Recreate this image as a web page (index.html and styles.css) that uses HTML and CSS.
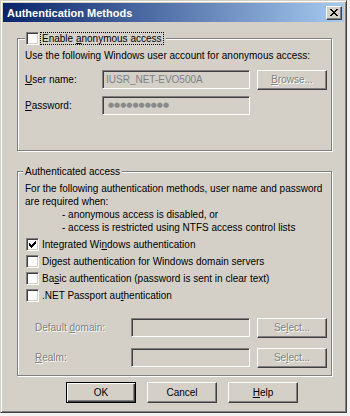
FILE: index.html
```html
<!DOCTYPE html>
<html>
  <head>
    <title>Authentication Methods</title>
    <link rel="stylesheet" href="styles.css">
  </head>
  <body>
    <div class="window">
      <div class="titlebar">
        <span class="title">Authentication Methods</span>
        <span class="close">
          <svg width="8" height="7" viewBox="0 0 8 7" shape-rendering="crispEdges">
            <path d="M0 0h2v1h-2zM6 0h2v1h-2zM1 1h2v1h-2zM5 1h2v1h-2zM2 2h4v1h-4zM3 3h2v1h-2zM2 4h4v1h-4zM1 5h2v1h-2zM5 5h2v1h-2zM0 6h2v1h-2zM6 6h2v1h-2z" fill="#000"/>
          </svg>
        </span>
      </div>

      <div class="content">
        <!-- anonymous access -->
        <fieldset class="group group-anon">
          <legend class="legend-check">
            <span class="check"></span>
            <span class="focus">Enable <u>a</u>nonymous access</span>
          </legend>
          <p class="line">Use the following Windows user account for anonymous access:</p>
          <div class="field-row">
            <span class="field-label"><u>U</u>ser name:</span>
            <div class="edit edit-wide">IUSR_NET-EVO500A</div>
            <div class="btn disabled"><u>B</u>rowse...</div>
          </div>
          <div class="field-row row-gap">
            <span class="field-label"><u>P</u>assword:</span>
            <div class="edit edit-wide dots">●●●●●●●●●●</div>
          </div>
        </fieldset>

        <!-- authenticated access -->
        <fieldset class="group group-auth">
          <legend class="legend-text">Authenticated access</legend>
          <p class="line">For the following authentication methods, user name and password</p>
          <p class="line">are required when:</p>
          <p class="line indent">- anonymous access is disabled, or</p>
          <p class="line indent">- access is restricted using NTFS access control lists</p>

          <div class="check-list">
            <div class="check-row">
              <span class="check">
                <svg width="9" height="9" viewBox="0 0 9 9" shape-rendering="crispEdges">
                  <path d="M1 3h1v3h-1zM2 4h1v3h-1zM3 5h1v3h-1zM4 4h1v3h-1zM5 3h1v3h-1zM6 2h1v3h-1zM7 1h1v3h-1z" fill="#000"/>
                </svg>
              </span>
              <span>Integrated Wi<u>n</u>dows authentication</span>
            </div>
            <div class="check-row">
              <span class="check"></span>
              <span>Di<u>g</u>est authentication for Windows domain servers</span>
            </div>
            <div class="check-row">
              <span class="check"></span>
              <span>Ba<u>s</u>ic authentication (password is sent in clear text)</span>
            </div>
            <div class="check-row">
              <span class="check"></span>
              <span>.NET Passport au<u>t</u>hentication</span>
            </div>
          </div>

          <div class="field-row domain-row">
            <span class="field-label domain-label disabled-text">Default <u>d</u>omain:</span>
            <div class="edit edit-narrow"></div>
            <div class="btn disabled">Se<u>l</u>ect...</div>
          </div>
          <div class="field-row realm-row">
            <span class="field-label domain-label disabled-text"><u>R</u>ealm:</span>
            <div class="edit edit-narrow"></div>
            <div class="btn disabled">Se<u>l</u>ect...</div>
          </div>
        </fieldset>

        <div class="buttons">
          <div class="btn btn-default">OK</div>
          <div class="btn">Cancel</div>
          <div class="btn"><u>H</u>elp</div>
        </div>
      </div>
    </div>
  </body>
</html>
```

FILE: styles.css
```css
body {
  margin: 0;
  background: #f2f2f2;
  font-family: "Liberation Sans", Arial, sans-serif;
  font-size: 10px;
  color: #000;
}
.window {
  width: 347px;
  height: 413px;
  box-sizing: border-box;
  background: #d4d0c8;
  border: 1px solid;
  border-color: #d4d0c8 #404040 #404040 #d4d0c8;
  box-shadow: inset 1px 1px #fff, inset -1px -1px #808080;
  padding: 2px;
  display: flex;
  flex-direction: column;
}
.titlebar {
  height: 19px;
  flex: none;
  background: linear-gradient(90deg, #0a246a, #a6caf0);
  display: flex;
  align-items: center;
  justify-content: space-between;
  padding: 0 2px 0 4px;
}
.title {
  color: #fff;
  font-weight: bold;
  font-size: 11px;
  padding-top: 1px;
}
.close {
  width: 16px;
  height: 14px;
  box-sizing: border-box;
  background: #d4d0c8;
  border: 1px solid;
  border-color: #fff #404040 #404040 #fff;
  box-shadow: inset -1px -1px #808080;
  display: flex;
  align-items: center;
  justify-content: center;
  padding-bottom: 1px;
}
.content {
  padding: 10px 12px 0 14px;
}
.group {
  margin: 0;
  padding: 4px 4px 35px 7px;
  border: 1px solid #808080;
  box-shadow: inset 1px 1px #fff, 1px 1px #fff;
  min-width: 0;
}
.group-auth {
  margin-top: 14px;
  padding-bottom: 8px;
}
.legend-check {
  display: flex;
  align-items: center;
  padding: 0 2px 0 1px;
  background: #d4d0c8;
}
.legend-text {
  margin-left: -2px;
  padding: 0 2px;
  line-height: 13px;
  background: #d4d0c8;
}
.focus {
  margin-left: 1px;
  padding: 0 1px;
  line-height: 11px;
  border: 1px dotted #000;
}
.check {
  width: 13px;
  height: 13px;
  box-sizing: border-box;
  flex: none;
  background: #fff;
  border: 1px solid;
  border-color: #808080 #fff #fff #808080;
  box-shadow: inset 1px 1px #404040, inset -1px -1px #d4d0c8;
  padding: 1px 0 0 1px;
}
.check svg {
  display: block;
}
.line {
  margin: 0;
  line-height: 13px;
  white-space: nowrap;
}
.indent {
  padding-left: 37px;
}
.field-row {
  display: flex;
  align-items: center;
  height: 19px;
  margin-top: 8px;
}
.row-gap {
  margin-top: 7px;
}
.field-label {
  width: 77px;
  flex: none;
}
.domain-label {
  width: 96px;
  padding-left: 10px;
}
.edit {
  height: 19px;
  box-sizing: border-box;
  background: #d4d0c8;
  border: 1px solid;
  border-color: #808080 #fff #fff #808080;
  box-shadow: inset 1px 1px #404040, inset -1px -1px #d4d0c8;
  color: #808080;
  padding: 0 3px;
  line-height: 17px;
  flex: none;
}
.edit-wide {
  width: 148px;
}
.edit-narrow {
  width: 119px;
}
.dots {
  padding-left: 5px;
  font-family: "DejaVu Sans", sans-serif;
  font-size: 7px;
  letter-spacing: 0;
  color: #8a8a8a;
}
.btn {
  width: 70px;
  height: 20px;
  box-sizing: border-box;
  flex: none;
  background: #d4d0c8;
  border: 1px solid;
  border-color: #fff #404040 #404040 #fff;
  box-shadow: inset -1px -1px #808080;
  display: flex;
  align-items: center;
  justify-content: center;
  margin-left: 7px;
}
.disabled,
.disabled-text {
  color: #808080;
  text-shadow: 1px 1px 0 #fff;
}
.check-list {
  margin-top: 4px;
}
.check-row {
  display: flex;
  align-items: center;
  height: 13px;
  margin-bottom: 4px;
  padding-left: 1px;
  white-space: nowrap;
}
.check-row .check {
  margin-right: 3px;
}
.domain-row {
  margin-top: 16px;
}
.realm-row {
  margin-top: 11px;
}
.buttons {
  display: flex;
  gap: 11px;
  margin-top: 6px;
  padding-left: 49px;
}
.buttons .btn {
  height: 21px;
  margin-left: 0;
}
.btn-default {
  border: 1px solid #000;
  box-shadow: inset 1px 1px #fff, inset -1px -1px #404040, inset -2px -2px #808080;
}
```
